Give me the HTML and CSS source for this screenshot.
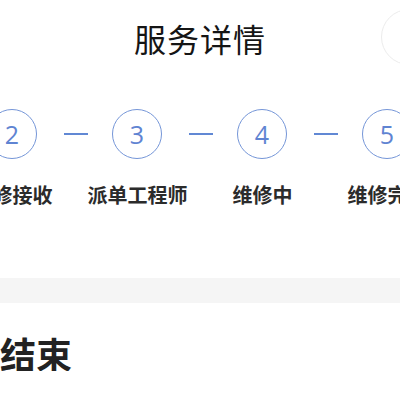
FILE: index.html
```html
<!DOCTYPE html>
<html lang="zh-CN">
<head>
<meta charset="utf-8">
<title>服务详情</title>
<link rel="stylesheet" href="styles.css">
</head>
<body>
  <header class="topbar">
    <h1 class="topbar-title">服务详情</h1>
    <span class="capsule"></span>
  </header>

  <section class="progress">
    <div class="progress-track">
      <span class="step-dot">1</span><span class="step-line"></span>
      <span class="step-dot">2</span><span class="step-line"></span>
      <span class="step-dot">3</span><span class="step-line"></span>
      <span class="step-dot">4</span><span class="step-line"></span>
      <span class="step-dot">5</span><span class="step-line"></span>
      <span class="step-dot">6</span>
    </div>
    <div class="progress-labels">
      <span class="step-label">提交申请</span>
      <span class="step-label">维修接收</span>
      <span class="step-label">派单工程师</span>
      <span class="step-label">维修中</span>
      <span class="step-label">维修完成</span>
      <span class="step-label">服务评价</span>
    </div>
  </section>

  <div class="divider"></div>

  <section class="status">
    <p class="status-text">结束</p>
  </section>
</body>
</html>
```

FILE: styles.css
```css
* {
  box-sizing: border-box;
}

html, body {
  margin: 0;
  padding: 0;
  background: #ffffff;
  overflow: hidden;
}

body {
  font-family: "Noto Sans CJK SC", "Noto Sans", sans-serif;
  color: #222222;
}

/* top navigation bar */
.topbar {
  position: relative;
  height: 76px;
  display: flex;
  align-items: center;
  justify-content: center;
}

.topbar-title {
  margin: 0;
  font-size: 32px;
  font-weight: 400;
  line-height: 1;
  color: #151515;
  letter-spacing: 1px;
}

/* round floating button at the right edge */
.capsule {
  position: absolute;
  top: 9px;
  right: -37px;
  width: 56px;
  height: 56px;
  border-radius: 50%;
  border: 1px solid #ececec;
  background: #ffffff;
}

/* progress steps */
.progress {
  padding: 33px 0 69px;
  display: flex;
  flex-direction: column;
  align-items: center;
}

.progress-track {
  display: flex;
  align-items: center;
  width: 750px;
  flex-shrink: 0;
  padding: 0 38px 0 37px;
}

.step-dot {
  width: 50px;
  height: 50px;
  flex-shrink: 0;
  border-radius: 50%;
  border: 1.5px solid #7596d8;
  display: flex;
  align-items: center;
  justify-content: center;
  font-family: "Open Sans", "Noto Sans", sans-serif;
  font-size: 25px;
  font-weight: 400;
  color: #5f84d2;
  line-height: 1;
}

.step-line {
  width: 24px;
  height: 2px;
  flex-shrink: 0;
  margin: 0 24px 0 27px;
  background: #6188d4;
}

.progress-labels {
  margin-top: 22px;
  display: grid;
  grid-template-columns: repeat(6, 125px);
  width: 750px;
  flex-shrink: 0;
}

.step-label {
  text-align: center;
  white-space: nowrap;
  font-size: 20px;
  font-weight: 700;
  line-height: 28px;
  color: #2b2b2b;
}

/* grey spacer band */
.divider {
  height: 25px;
  background: #f5f5f5;
}

/* current state */
.status {
  padding: 32px 0 0;
}

.status-text {
  margin: 0;
  font-size: 36px;
  font-weight: 700;
  line-height: 1;
  color: #222222;
}
```
